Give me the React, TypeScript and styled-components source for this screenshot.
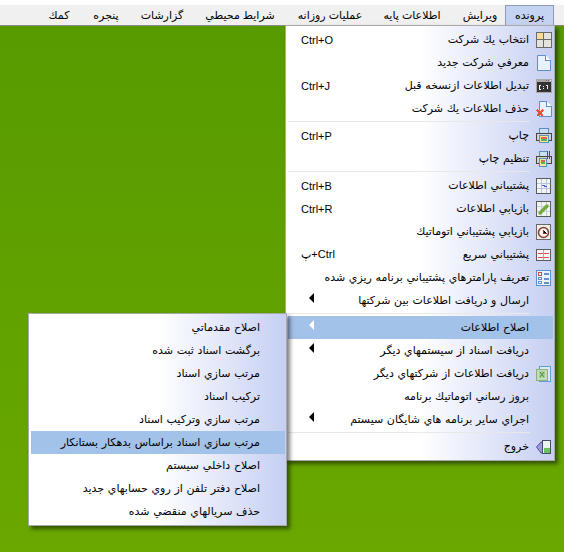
import React, { FC, ReactNode } from "react";
import styled, { createGlobalStyle, css } from "styled-components";

const GlobalStyle = createGlobalStyle`
  html, body {
    margin: 0;
    padding: 0;
    background: #fff;
  }
  body {
    font-family: "Liberation Sans", "DejaVu Sans", sans-serif;
    font-size: 11px;
    color: #000;
  }
`;

const Page = styled.div`
  position: relative;
  width: 564px;
  height: 552px;
  overflow: hidden;
  padding-top: 5px;
  box-sizing: border-box;
  display: flex;
  flex-direction: column;
`;

const MenuBar = styled.div`
  display: flex;
  direction: rtl;
  height: 20px;
  padding-right: 10px;
  background: #f0f0f0;
  border-bottom: 1px solid #8a8a8a;
  flex: none;
`;

const BarItem = styled.div<{ $active?: boolean; $width: number }>`
  width: ${(p) => p.$width}px;
  box-sizing: border-box;
  text-align: center;
  line-height: 20px;
  white-space: nowrap;
  ${(p) =>
    p.$active &&
    css`
      background: #c5d3f2;
      border: 1px solid #8d9bb4;
      border-bottom: 0;
      line-height: 19px;
    `}
`;

const Desktop = styled.div`
  flex: 1;
  background: linear-gradient(180deg, #579b00 0%, #6aa800 100%);
`;

const DropMenu = styled.div<{ $left: number; $top: number; $width: number }>`
  position: absolute;
  left: ${(p) => p.$left}px;
  top: ${(p) => p.$top}px;
  width: ${(p) => p.$width}px;
  box-sizing: border-box;
  direction: rtl;
  padding: 2px 1px 2px 2px;
  border: 1px solid #a9a9a9;
  background: linear-gradient(90deg, #fff 0%, #fff 50%, #c6cff2 100%);
  box-shadow: 3px 3px 4px rgba(0, 0, 0, 0.5);
`;

const Row = styled.div<{ $selected?: boolean }>`
  display: flex;
  align-items: center;
  height: 23px;
  position: relative;
  ${(p) => p.$selected && "background: #a3c2e9;"}
`;

const IconSlot = styled.div`
  width: 23px;
  height: 23px;
  padding-right: 1px;
  flex: none;
  display: flex;
  align-items: center;
  justify-content: flex-start;
`;

const Label = styled.span`
  white-space: nowrap;
  word-spacing: 0.6px;
  line-height: 23px;
`;

const Shortcut = styled.span`
  position: absolute;
  left: 13px;
  font-size: 11px;
`;

const Arrow = styled.span<{ $light?: boolean }>`
  position: absolute;
  left: 21px;
  width: 0;
  height: 0;
  margin-top: -6px;
  border-top: 5px solid transparent;
  border-bottom: 5px solid transparent;
  border-right: 5px solid ${(p) => (p.$light ? "#fff" : "#000")};
`;

const Divider = styled.div`
  height: 1px;
  margin: 1px 23px 2px 0;
  background: #e8e8e8;
`;

const SubRow = styled(Row)`
  padding-right: 25px;
`;

const IconSvg: FC<{ children: ReactNode }> = ({ children }) => (
  <svg width="16" height="16" viewBox="0 0 16 16" shapeRendering="crispEdges">
    {children}
  </svg>
);

const icons: Record<string, ReactNode> = {
  grid: (
    <IconSvg>
      <rect x="0.5" y="0.5" width="15" height="15" fill="#e4e4dc" stroke="#6a6a6a" />
      <rect x="1" y="1" width="6" height="6" fill="#f6dc9e" />
      <path d="M7.5 0V16M0 7.5H16" stroke="#6a6a6a" />
    </IconSvg>
  ),
  page: (
    <IconSvg>
      <path d="M1.5 .5H9.5L14.5 5.5V15.5H1.5Z" fill="#e8f2fc" stroke="#5d8fd0" shapeRendering="auto" />
      <path d="M9.5 .5V5.5H14.5" fill="#fff" stroke="#5d8fd0" />
    </IconSvg>
  ),
  cmd: (
    <IconSvg>
      <rect x="0" y="1" width="16" height="14" fill="#a8a8a8" />
      <rect x="1" y="4" width="14" height="10" fill="#333" />
      <rect x="10" y="2" width="1" height="1" fill="#d05050" />
      <rect x="12" y="2" width="1" height="1" fill="#5070d0" />
      <rect x="14" y="2" width="1" height="1" fill="#f0f0f0" />
      <path d="M3 7H5M3 7V11M3 11H5M7 8H8M7 10H8M10 7H11V11" stroke="#f4f4f4" />
    </IconSvg>
  ),
  pageDel: (
    <IconSvg>
      <path d="M3.5 .5H10.5L15.5 5.5V15.5H3.5Z" fill="#e8f2fc" stroke="#5d8fd0" shapeRendering="auto" />
      <path d="M10.5 .5V5.5H15.5" fill="#fff" stroke="#5d8fd0" />
      <path d="M1 9L7 15M7 9L1 15" stroke="#e8503a" strokeWidth="2.4" />
    </IconSvg>
  ),
  print: (
    <IconSvg>
      <rect x="3.5" y="0.5" width="9" height="5" fill="#c8e0f6" stroke="#5c8cc0" />
      <rect x="0.5" y="5.5" width="15" height="7" fill="#d4d4d4" stroke="#444" />
      <rect x="3.5" y="7.5" width="9" height="7" fill="#f4ec8a" stroke="#5c8cc0" />
      <rect x="5" y="9" width="6" height="2" fill="#e06060" />
      <rect x="5" y="11" width="6" height="2" fill="#50b860" />
    </IconSvg>
  ),
  printSetup: (
    <IconSvg>
      <rect x="3.5" y="0.5" width="8" height="5" fill="#c8e0f6" stroke="#5c8cc0" />
      <rect x="0.5" y="5.5" width="15" height="7" fill="#d4d4d4" stroke="#444" />
      <rect x="3.5" y="7.5" width="7" height="8" fill="#f4ec8a" stroke="#5c8cc0" />
      <rect x="5" y="9" width="4" height="2" fill="#e06060" />
      <rect x="5" y="11" width="4" height="2" fill="#50b860" />
      <path d="M11.5 0V8M13.5 0V8" stroke="#555" />
    </IconSvg>
  ),
  backup: (
    <IconSvg>
      <rect x="0.5" y="0.5" width="14" height="15" fill="#f2f4f6" stroke="#5a5a5a" />
      <path d="M1 5H14M1 10H14M5 1V15M10 1V15" stroke="#b8c8dc" />
      <path d="M6 7H9M8 8H11" stroke="#3a62c8" />
    </IconSvg>
  ),
  restore: (
    <IconSvg>
      <rect x="0.5" y="0.5" width="14" height="15" fill="#f2f4f0" stroke="#5a5a5a" />
      <path d="M1 5H14M1 10H14M5 1V15M10 1V15" stroke="#c8d0d8" />
      <path d="M4 12L11 5" stroke="#74ac3c" strokeWidth="3.4" strokeLinecap="round" shapeRendering="auto" />
    </IconSvg>
  ),
  clock: (
    <IconSvg>
      <rect x="0.5" y="0.5" width="14" height="15" fill="#f0eee8" stroke="#6a6a6a" />
      <circle cx="7.5" cy="8.5" r="5" fill="#fbf6f2" stroke="#8a3c34" strokeWidth="1.5" shapeRendering="auto" />
      <path d="M7.5 5.5V9H10.5" stroke="#8a3c34" />
    </IconSvg>
  ),
  quick: (
    <IconSvg>
      <rect x="0.5" y="2.5" width="14" height="11" fill="#f8f4f4" stroke="#5a5a5a" />
      <path d="M2 6H13M2 10H13" stroke="#d85050" />
      <path d="M7.5 3V13" stroke="#aaa" />
    </IconSvg>
  ),
  params: (
    <IconSvg>
      <rect x="0.5" y="0.5" width="14" height="15" fill="#eaf2fb" stroke="#5d8fd0" />
      <rect x="2.5" y="2.5" width="3" height="3" fill="#fff" stroke="#c05050" />
      <rect x="2.5" y="7.5" width="3" height="2" fill="#fff" stroke="#5d8fd0" />
      <rect x="2.5" y="11.5" width="3" height="2" fill="#fff" stroke="#5d8fd0" />
      <path d="M8 3.5H13M8 8.5H13M8 12.5H13" stroke="#6a8fc8" strokeWidth="2" />
    </IconSvg>
  ),
  excel: (
    <IconSvg>
      <rect x="3.5" y="0.5" width="11" height="15" fill="#dcecf6" stroke="#5d9fd0" />
      <rect x="0" y="3" width="11" height="11" fill="#c4dcb8" stroke="#8ab080" />
      <rect x="3" y="5" width="6" height="7" fill="#a8d098" />
      <path d="M4 6L8 11M8 6L4 11" stroke="#4a8a40" shapeRendering="auto" />
    </IconSvg>
  ),
  exit: (
    <IconSvg>
      <path d="M0.5 8L5 3H7V14H5Z" fill="#9a98e0" stroke="#4a4a8a" strokeWidth="0.9" shapeRendering="auto" />
      <rect x="6.5" y="1.5" width="8" height="13" fill="#eef2ee" stroke="#4a4a6a" />
      <rect x="8" y="9" width="6" height="5" fill="#6cc060" />
    </IconSvg>
  ),
};

type Item = {
  label?: string;
  icon?: string;
  shortcut?: string;
  rtlShortcut?: boolean;
  sub?: boolean;
  selected?: boolean;
  divider?: boolean;
};

const fileItems: Item[] = [
  { label: "انتخاب يك شركت", icon: "grid", shortcut: "Ctrl+O" },
  { label: "معرفي شركت جديد", icon: "page" },
  { label: "تبديل اطلاعات ازنسخه قبل", icon: "cmd", shortcut: "Ctrl+J" },
  { label: "حذف اطلاعات يك شركت", icon: "pageDel" },
  { divider: true },
  { label: "چاپ", icon: "print", shortcut: "Ctrl+P" },
  { label: "تنظيم چاپ", icon: "printSetup" },
  { divider: true },
  { label: "پشتيباني اطلاعات", icon: "backup", shortcut: "Ctrl+B" },
  { label: "بازيابي اطلاعات", icon: "restore", shortcut: "Ctrl+R" },
  { label: "بازيابي پشتيباني اتوماتيك", icon: "clock" },
  { label: "پشتيباني سريع", icon: "quick", shortcut: "Ctrl+پ", rtlShortcut: true },
  { label: "تعريف پارامترهاي پشتيباني برنامه ريزي شده", icon: "params" },
  { label: "ارسال و دريافت اطلاعات بين شركتها", sub: true },
  { divider: true },
  { label: "اصلاح اطلاعات", sub: true, selected: true },
  { label: "دريافت اسناد از سيستمهاي ديگر", sub: true },
  { label: "دريافت اطلاعات از شركتهاي ديگر", icon: "excel" },
  { label: "بروز رساني اتوماتيك برنامه" },
  { label: "اجراي ساير برنامه هاي شايگان سيستم", sub: true },
  { divider: true },
  { label: "خروج", icon: "exit" },
];

const fixItems = [
  "اصلاح مقدماتي",
  "برگشت اسناد ثبت شده",
  "مرتب سازي اسناد",
  "تركيب اسناد",
  "مرتب سازي وتركيب اسناد",
  "مرتب سازي اسناد براساس بدهكار بستانكار",
  "اصلاح داخلي سيستم",
  "اصلاح دفتر تلفن از روي حسابهاي جديد",
  "حذف سريالهاي منقضي شده",
];

const barItems: { label: string; width: number; active?: boolean }[] = [
  { label: "پرونده", width: 49, active: true },
  { label: "ويرايش", width: 50 },
  { label: "اطلاعات پايه", width: 86 },
  { label: "عمليات روزانه", width: 78 },
  { label: "شرايط محيطي", width: 102 },
  { label: "گزارشات", width: 54 },
  { label: "پنجره", width: 58 },
  { label: "كمك", width: 36 },
];

const App: FC = () => (
  <Page>
    <GlobalStyle />
    <MenuBar>
      {barItems.map((b) => (
        <BarItem key={b.label} $active={b.active} $width={b.width}>
          {b.label}
        </BarItem>
      ))}
    </MenuBar>
    <Desktop />

    <DropMenu $left={285} $top={25} $width={270}>
      {fileItems.map((it, i) =>
        it.divider ? (
          <Divider key={i} />
        ) : (
          <Row key={i} $selected={it.selected}>
            <IconSlot>{it.icon && icons[it.icon]}</IconSlot>
            <Label>{it.label}</Label>
            {it.shortcut && (
              <Shortcut dir={it.rtlShortcut ? "rtl" : "ltr"}>{it.shortcut}</Shortcut>
            )}
            {it.sub && <Arrow $light={it.selected} />}
          </Row>
        )
      )}
    </DropMenu>

    <DropMenu $left={28} $top={313} $width={259}>
      {fixItems.map((label, i) => (
        <SubRow key={label} $selected={i === 5}>
          <Label>{label}</Label>
        </SubRow>
      ))}
    </DropMenu>
  </Page>
);

export default App;
